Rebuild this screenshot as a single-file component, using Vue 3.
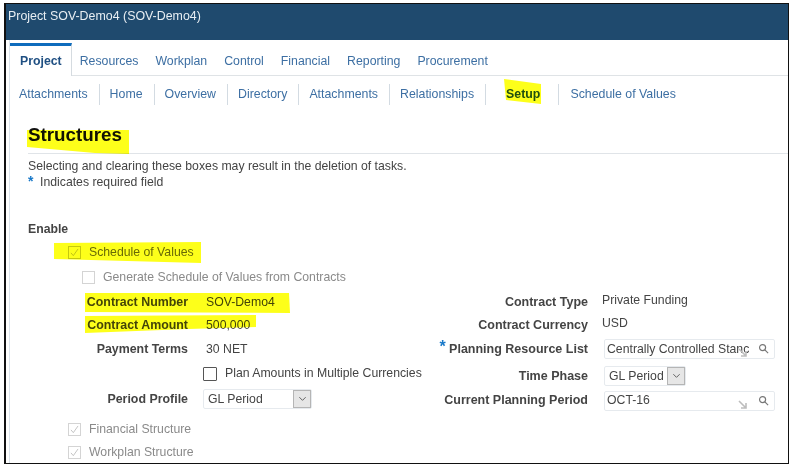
<script setup>
const tabs = ['Resources', 'Workplan', 'Control', 'Financial', 'Reporting', 'Procurement']
const subLeft = ['Attachments', 'Home', 'Overview', 'Directory', 'Attachments', 'Relationships']
const leftRows = [
  { label: 'Contract Number', value: 'SOV-Demo4', cls: 'r-num' },
  { label: 'Contract Amount', value: '500,000', cls: 'r-amt' },
  { label: 'Payment Terms', value: '30 NET', cls: 'r-pay' }
]
</script>

<template>
  <div class="page">
    <div class="frame">
      <header class="banner">Project SOV-Demo4 (SOV-Demo4)</header>
      <div class="body">
        <nav class="tabs">
          <span class="tab active">Project</span>
          <span v-for="t in tabs" :key="t" class="tab">{{ t }}</span>
        </nav>
        <nav class="subtabs">
          <span v-for="(s, i) in subLeft" :key="i" class="sub">{{ s }}</span>
          <span class="sub setup">Setup</span>
          <span class="sub last">Schedule of Values</span>
        </nav>
        <main class="content">
          <h1 class="title">Structures</h1>
          <p class="intro">Selecting and clearing these boxes may result in the deletion of tasks.</p>
          <p class="req"><span class="star">*</span><span class="reqtext">Indicates required field</span></p>
          <div class="enable">Enable</div>

          <label class="check sov">
            <span class="box on"><svg viewBox="0 0 14 14"><path d="M2.5 7.5 5.5 11 11.5 2.5" /></svg></span>
            <span>Schedule of Values</span>
          </label>
          <label class="check gen">
            <span class="box"></span>
            <span>Generate Schedule of Values from Contracts</span>
          </label>

          <div class="form">
            <div class="col-left">
              <div v-for="r in leftRows" :key="r.label" class="row" :class="r.cls">
                <span class="lab">{{ r.label }}</span>
                <span class="val">{{ r.value }}</span>
              </div>
              <div class="row r-plan">
                <span class="lab"></span>
                <span class="box dark"></span>
                <span class="plan">Plan Amounts in Multiple Currencies</span>
              </div>
              <div class="row r-prof">
                <span class="lab">Period Profile</span>
                <span class="select wide">
                  <span>GL Period</span>
                  <span class="arrow"><svg viewBox="0 0 10 6"><path d="M1.5 1 5 4.5 8.500 1" /></svg></span>
                </span>
              </div>
            </div>
            <div class="col-right">
              <div class="rrow rr-type"><span class="rlab">Contract Type</span><span class="rval">Private Funding</span></div>
              <div class="rrow rr-cur"><span class="rlab">Contract Currency</span><span class="rval">USD</span></div>
              <div class="rrow rr-list">
                <span class="rlab"><span class="star2">*</span> Planning Resource List</span>
                <span class="lookup">
                  <span class="ltext">Centrally Controlled Stanc</span>
                  <svg class="corner" viewBox="0 0 10 10"><path d="M1 1 8 8M8 3V8H3" /></svg>
                  <svg class="glass" viewBox="0 0 12 12"><circle cx="5" cy="5" r="3.300" /><path d="M7.500 7.500 11 11" /></svg>
                </span>
              </div>
              <div class="rrow rr-phase">
                <span class="rlab">Time Phase</span>
                <span class="select narrow">
                  <span>GL Period</span>
                  <span class="arrow"><svg viewBox="0 0 10 6"><path d="M1.5 1 5 4.5 8.500 1" /></svg></span>
                </span>
              </div>
              <div class="rrow rr-period">
                <span class="rlab">Current Planning Period</span>
                <span class="lookup">
                  <span class="ltext">OCT-16</span>
                  <svg class="corner" viewBox="0 0 10 10"><path d="M1 1 8 8M8 3V8H3" /></svg>
                  <svg class="glass" viewBox="0 0 12 12"><circle cx="5" cy="5" r="3.300" /><path d="M7.500 7.500 11 11" /></svg>
                </span>
              </div>
            </div>
          </div>

          <label class="check fin">
            <span class="box on"><svg viewBox="0 0 14 14"><path d="M2.5 7.500 5.500 11 11.500 2.500" /></svg></span>
            <span>Financial Structure</span>
          </label>
          <label class="check work">
            <span class="box on"><svg viewBox="0 0 14 14"><path d="M2.5 7.500 5.500 11 11.500 2.500" /></svg></span>
            <span>Workplan Structure</span>
          </label>
        </main>
      </div>
    </div>

    <svg class="marker" viewBox="0 0 797 469" aria-hidden="true">
      <polygon points="27,130 129,130 129,154 95,153 27,147" />
      <polygon points="504,79 541,84 541,104 506,100" />
      <polygon points="54,243 201,242 201,263 54,259" />
      <polygon points="85,293 289,293 290,313 85,312" />
      <polygon points="85,316 256,315 256,327 188,329 85,333" />
    </svg>
  </div>
</template>

<style>
html, body { margin: 0; background: #fff; }
</style>

<style scoped>
.page {
  position: relative;
  width: 797px;
  height: 469px;
  overflow: hidden;
  background: #fff;
  font-family: "Liberation Sans", Arial, sans-serif;
  font-size: 12.25px;
  color: #444;
}
.frame {
  box-sizing: border-box;
  width: 785px;
  height: 461px;
  margin: 3px 0 0 4px;
  display: flex;
  flex-direction: column;
  border: 1px solid #111;
  border-left-width: 2px;
  overflow: hidden;
  filter: blur(0.35px);
}
.banner {
  box-sizing: border-box;
  height: 36px;
  flex: none;
  padding: 5px 0 0 2px;
  background: #1f4a6e;
  color: #e8eef3;
  font-size: 12.4px;
  line-height: 14px;
}
.body {
  flex: 1;
  min-height: 0;
  margin-left: 3px;
  border-left: 1px solid #dbe3ea;
}
.tabs {
  display: flex;
  height: 36px;
  box-sizing: border-box;
  padding-top: 3px;
  border-bottom: 1px solid #dfe3e6;
  color: #3d6fa3;
  font-size: 12.3px;
}
.tab {
  padding: 11px 0 0;
  margin-right: 17px;
  line-height: 15px;
}
.tab.active {
  box-sizing: border-box;
  height: 33px;
  margin: 0 8px 0 0;
  padding: 8px 9px 0 10px;
  border-top: 3px solid #0f6cbd;
  border-right: 1px solid #d5dbe0;
  background: #fff;
  color: #1f4f82;
  font-weight: 700;
}
.subtabs {
  display: flex;
  align-items: center;
  height: 31px;
  padding: 3px 0 0 9px;
  color: #3d6fa3;
  font-size: 12.35px;
}
.sub {
  box-sizing: border-box;
  height: 21px;
  line-height: 21px;
  padding-right: 11px;
  margin-right: 10px;
  border-right: 1px solid #d3dbe2;
}
.sub.setup {
  font-weight: 700;
  color: #1f4f82;
  padding-left: 10px;
  padding-right: 18px;
  margin-right: 11px;
}
.sub.last { border: 0; }
.content { padding: 0 0 0 18px; }
.title {
  margin: 0;
  height: 44px;
  box-sizing: border-box;
  padding-top: 14px;
  border-bottom: 1px solid #e0e4e8;
  color: #111;
  font-size: 18.8px;
  line-height: 22px;
  font-weight: 700;
}
.intro {
  margin: 5px 0 0;
  line-height: 15px;
}
.req {
  display: flex;
  align-items: flex-start;
  height: 16px;
  margin: 0;
  line-height: 15px;
}
.reqtext { margin-top: 1px; }
.star {
  width: 12px;
  height: 14px;
  color: #1878c8;
  font-size: 14px;
  font-weight: 700;
  line-height: 14px;
}
.enable {
  margin-top: 32px;
  font-weight: 700;
  line-height: 15px;
}
.check {
  display: flex;
  align-items: center;
  color: #8a8a8a;
  line-height: 15px;
  gap: 8px;
}
.sov { margin: 8px 0 0 40px; color: #6a6a30; }
.gen { margin: 10px 0 0 54px; }
.fin { margin: 12px 0 0 40px; }
.work { margin: 8px 0 0 40px; }
.box {
  box-sizing: border-box;
  flex: none;
  width: 13px;
  height: 13px;
  border: 1px solid #d4d4d4;
  background: #fff;
}
.sov .box { background: transparent; border-color: #c8c880; }
.box svg { display: block; width: 11px; height: 11px; fill: none; stroke: #bbb; stroke-width: 1.100; }
.box.dark { border-color: #555; width: 14px; height: 14px; border-radius: 1px; }
.form {
  display: flex;
  margin-top: 10px;
}
.col-left { width: 400px; flex: none; }
.col-right { flex: 1; }
.row { display: flex; align-items: center; }
.lab {
  flex: none;
  width: 160px;
  text-align: right;
  font-size: 12.4px;
  font-weight: 700;
  line-height: 15px;
}
.val { margin-left: 18px; line-height: 15px; }
.r-num, .r-pay, .r-plan, .r-amt { height: 15px; }
.r-amt { margin-top: 8px; }
.r-pay { margin-top: 9px; }
.r-plan { margin-top: 9px; }
.r-plan .box { margin-left: 15px; }
.plan { margin-left: 8px; line-height: 15px; white-space: nowrap; }
.r-prof { height: 20px; margin-top: 8px; }
.r-prof .select { margin-left: 15px; }
.select {
  box-sizing: border-box;
  display: inline-flex;
  align-items: center;
  justify-content: space-between;
  height: 20px;
  padding-left: 4px;
  border: 1px solid #e6eaee;
  border-radius: 2px;
  background: #fff;
}
.select.wide { width: 109px; }
.select.narrow { width: 82px; }
.arrow {
  box-sizing: border-box;
  display: flex;
  align-items: center;
  justify-content: center;
  width: 18px;
  height: 18px;
  border: 1px solid #b5b5b5;
  background: #e6e6e6;
}
.arrow svg { width: 9px; height: 6px; fill: none; stroke: #555; stroke-width: 1; }
.rrow { display: flex; align-items: center; }
.rlab {
  flex: none;
  width: 160px;
  text-align: right;
  font-size: 12.5px;
  font-weight: 700;
  white-space: nowrap;
  line-height: 15px;
}
.rval { margin-left: 14px; margin-top: -5px; line-height: 15px; }
.star2 { color: #1878c8; font-size: 16px; line-height: 10px; vertical-align: 1px; }
.rr-type { height: 15px; }
.rr-cur { height: 15px; margin-top: 8px; }
.rr-list { height: 20px; margin-top: 6px; }
.rr-phase { height: 20px; margin-top: 7px; }
.rr-period { height: 19px; margin-top: 5px; }
.rrow .select, .lookup { margin-left: 16px; }
.lookup {
  box-sizing: border-box;
  position: relative;
  display: flex;
  align-items: center;
  width: 171px;
  height: 20px;
  padding-left: 2px;
  border: 1px solid #e6eaee;
  border-radius: 2px;
}
.ltext { white-space: nowrap; margin-top: -1px; }
.corner {
  position: absolute;
  right: 26px;
  bottom: 0;
  width: 10px;
  height: 10px;
  fill: none;
  stroke: #bdbdbd;
  stroke-width: 1.600;
}
.glass {
  position: absolute;
  right: 5px;
  top: 3px;
  width: 11px;
  height: 11px;
  fill: none;
  stroke: #777;
  stroke-width: 1.300;
}
.marker {
  position: absolute;
  inset: 0;
  width: 797px;
  height: 469px;
  mix-blend-mode: multiply;
  pointer-events: none;
}
.marker polygon { fill: #fdff1a; }
</style>
